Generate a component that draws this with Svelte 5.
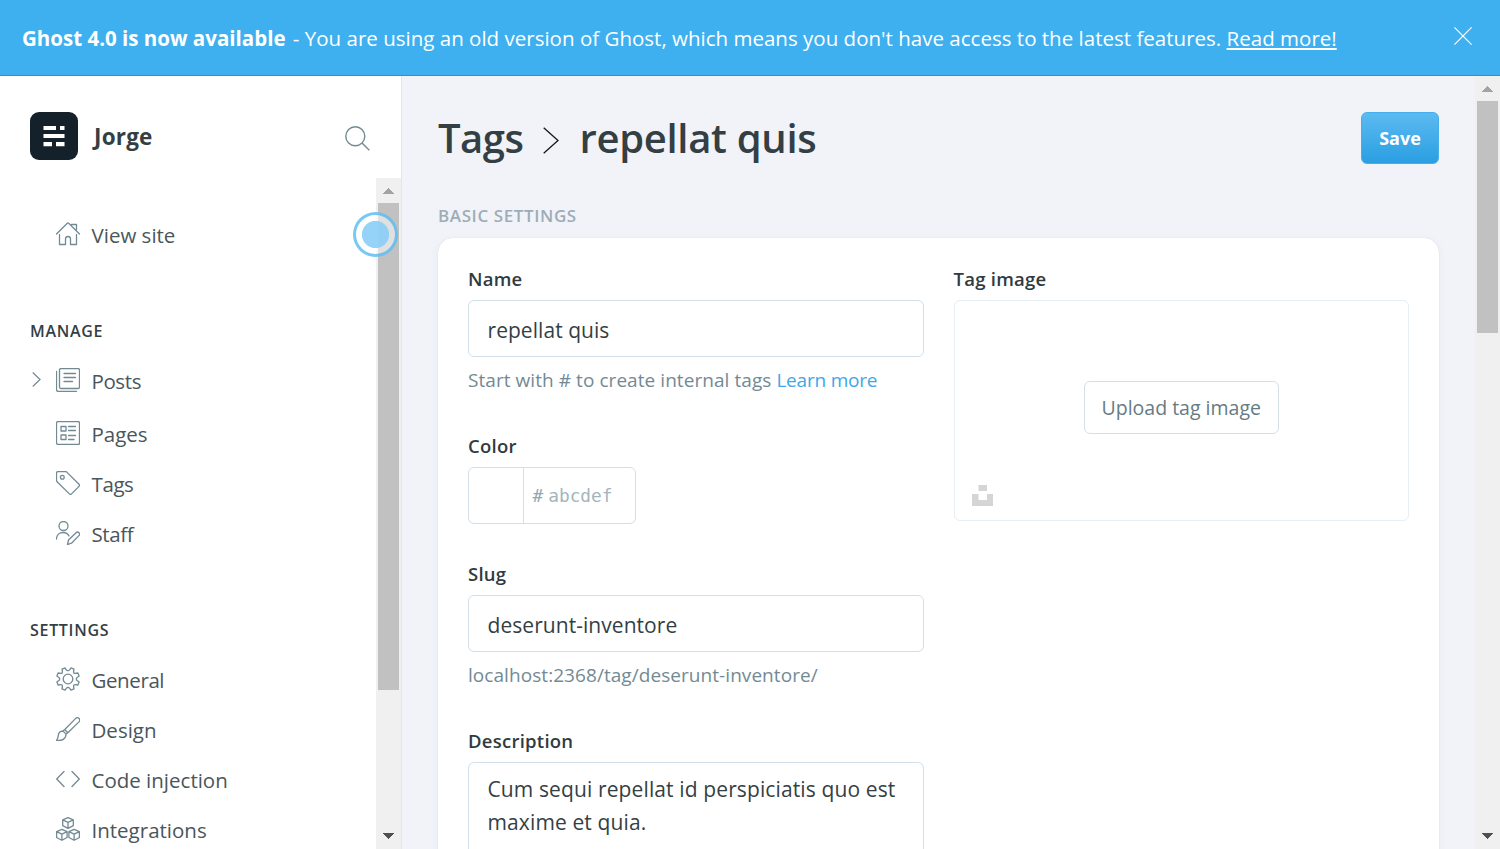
<script>
  const manage = [
    { name: 'Posts', icon: 'posts', expandable: true, tight: true },
    { name: 'Pages', icon: 'pages' },
    { name: 'Tags', icon: 'tag', tight: true },
    { name: 'Staff', icon: 'staff', tight: true }
  ];
  const settings = [
    { name: 'General', icon: 'gear', tight: true },
    { name: 'Design', icon: 'brush' },
    { name: 'Code injection', icon: 'code' },
    { name: 'Integrations', icon: 'cubes' }
  ];
</script>

{#snippet icon(kind)}
  <svg class="icon" viewBox="0 0 24 24">
    {#if kind === 'home'}
      <path d="M.5 12 11.3 1.2a1 1 0 0 1 1.4 0L23.5 12M3.5 12.5v10h6V17a2.5 2.5 0 0 1 5 0v5.500h6v-10M15.500 2.500h5v5" />
    {:else if kind === 'posts'}
      <rect x="3.500" y=".5" width="20" height="20" rx="1.500" />
      <path d="M.5 3.500v18a2 2 0 0 0 2 2h18M8 5.500h11.500M8 9.500h11.500M8 13.500h8.500" />
    {:else if kind === 'pages'}
      <rect x=".5" y=".5" width="23" height="23" rx="1.500" />
      <path d="M5 5.500h5v4.500H5zM5 14h5v4.500H5zM12.500 5.500h7M12.500 9.500h7M12.500 14.500h7M12.500 18.500h5.500" />
    {:else if kind === 'tag'}
      <path d="M.5 2v7.300c0 .5.200 1 .6 1.400l12.300 12.200a1.500 1.500 0 0 0 2.100 0l7.500-7.500a1.500 1.500 0 0 0 0-2.100L10.800 1.100A2 2 0 0 0 9.400.5H2A1.500 1.500 0 0 0 .5 2Z" />
      <circle cx="6.300" cy="6.300" r="1.900" />
    {:else if kind === 'staff'}
      <circle cx="7.500" cy="5" r="4.500" />
      <path d="M.5 18v-1a6.500 6.500 0 0 1 6.500-5.500c2.800 0 5 1.300 6 3.500M11.500 23.500l1-4.500 7.600-7.300a2 2 0 0 1 2.800 2.900L15.500 22.200l-4 1.300Z" />
    {:else if kind === 'gear'}
      <circle cx="12" cy="12" r="4.800" />
      <path d="M9.800 2.400 9 .900 6 2.100l.4 2.600c.1 1-.7 1.800-1.700 1.700L2.100 6 .900 9l2 1.500c1 .7 1 2.300 0 3L.900 15l1.200 3 2.600-.4c1-.1 1.800.7 1.700 1.700L6 21.900l3 1.200 1.500-2c.7-1 2.300-1 3 0l1.500 2 3-1.200-.4-2.600c-.1-1 .7-1.800 1.700-1.700l2.600.4 1.200-3-2-1.500c-1-.7-1-2.300 0-3l2-1.500-1.200-3-2.600.4c-1 .1-1.800-.7-1.700-1.700l.4-2.600-3-1.200-1.500 2c-.9 1.100-2.800 1.100-3.700-.7Z" />
    {:else if kind === 'brush'}
      <path d="M8.800 12.500 19.700 1.400a2.400 2.400 0 0 1 3.300 3.500L11.800 15.700M8.800 12.500l3 3.200-1.700 1.400-3.200-3.100 1.900-1.500ZM6.900 14c-2.400.2-4.400 1.600-4.600 4.400-.1 2-.8 3.700-1.800 5 5.300.6 9.500-1.200 9.600-6.300" />
    {:else if kind === 'code'}
      <path d="M8 4.500.700 12 8 19.500M16 4.500l7.300 7.500-7.300 7.500" />
    {:else if kind === 'cubes'}
      <path d="m12 .6 5.300 2.300v5.800L12 11.300 6.700 8.700V2.900ZM6.700 2.900 12 5.300l5.300-2.400M12 5.300v6M5.900 12.400l5.200 2.300v5.800l-5.200 2.800-5.300-2.800v-5.800ZM.6 14.700l5.300 2.500 5.200-2.500M5.900 17.200v6.100M18.100 12.400l5.300 2.300v5.800l-5.300 2.800-5.200-2.800v-5.800ZM12.900 14.700l5.200 2.500 5.300-2.500M18.100 17.200v6.100" />
    {/if}
  </svg>
{/snippet}

{#snippet bar(kind)}
  <div class="scrollbar {kind}">
    <svg class="arrow up" viewBox="0 0 11 6" shape-rendering="crispEdges"><path d="M0 6 5.500 0 11 6Z" /></svg>
    <div class="track"><div class="thumb"></div></div>
    <svg class="arrow down" viewBox="0 0 11 6" shape-rendering="crispEdges"><path d="M0 0h11L5.500 6Z" /></svg>
  </div>
{/snippet}

<div class="app">
  <header class="banner">
    <div class="message"><b>Ghost 4.0 is now available</b> <span>- You are using an old version of Ghost, which means you don't have access to the latest features. <a href="#more">Read more!</a></span></div>
    <svg class="close" viewBox="0 0 18 18"><path d="m.4.4 17.200 17.200M17.600.4.4 17.600" /></svg>
  </header>
  <div class="body">
    <aside>
      <div class="site">
        <svg class="logo" viewBox="0 0 48 48">
          <rect width="48" height="48" rx="9" fill="#15212a" />
          <path fill="#fff" d="M13.500 14h12.500v4H13.500zM30 14h4.500v4H30zM13.500 22h21v4h-21zM13.500 30h8.500v4.200h-8.500zM26 30h8.500v4.200H26z" />
        </svg>
        <strong>Jorge</strong>
        <svg class="search" viewBox="0 0 25 25"><circle cx="10.300" cy="10.300" r="9.500" /><path d="m17 17 7.300 7.300" /></svg>
      </div>
      <div class="scroller">
        <nav>
          <div class="item view">{@render icon('home')}<span>View site</span></div>
          <h4>Manage</h4>
          {#each manage as m}
            <div class="item" class:tall={m.expandable} class:tight={m.tight}>
              {#if m.expandable}
                <svg class="chevron" viewBox="0 0 8 14"><path d="m.5.5 6.800 6.500L.5 13.500" /></svg>
              {/if}
              {@render icon(m.icon)}<span>{m.name}</span>
            </div>
          {/each}
          <h4 class="second">Settings</h4>
          {#each settings as s}
            <div class="item" class:tight={s.tight}>{@render icon(s.icon)}<span>{s.name}</span></div>
          {/each}
        </nav>
        {@render bar('side')}
        <div class="beacon"></div>
      </div>
    </aside>
    <main>
      <div class="content">
        <div class="heading">
          <h1>
            <span class="crumb">Tags</span>
            <svg viewBox="0 0 16 27"><path d="m.7.7 14.300 12.800L.7 26.300" /></svg>
            <span class="current">repellat quis</span>
          </h1>
          <button class="save">Save</button>
        </div>
        <h5>Basic settings</h5>
        <section class="card">
          <div class="column">
            <div class="label">Name</div>
            <div class="input">repellat quis</div>
            <p class="hint start">Start with # to create internal tags <a href="#learn">Learn more</a></p>
            <div class="label">Color</div>
            <div class="color"><div class="swatch"></div><span class="hash">#</span><span>abcdef</span></div>
            <div class="label slug">Slug</div>
            <div class="input">deserunt-inventore</div>
            <p class="hint">localhost:2368/tag/deserunt-inventore/</p>
            <div class="label">Description</div>
            <div class="input area">Cum sequi repellat id perspiciatis quo est maxime et quia.</div>
          </div>
          <div class="column">
            <div class="label">Tag image</div>
            <div class="uploader">
              <button>Upload tag image</button>
              <svg class="unsplash" viewBox="0 0 21 21"><path d="M6.500 0h8.500v6H6.500zM0 9h6.500v6H15V9h6v12H0z" /></svg>
            </div>
          </div>
        </section>
      </div>
      {@render bar('page')}
    </main>
  </div>
</div>

<style>
  :global(body) { margin: 0; overflow: hidden; }
  * { box-sizing: border-box; }
  .app {
    display: flex; flex-direction: column; width: 1500px; height: 849px; overflow: hidden;
    font-family: "Open Sans", "Noto Sans", sans-serif; color: #343f44; background: #fff;
  }
  svg { display: block; flex: none; fill: none; }
  .banner {
    height: 76px; flex: none; display: flex; align-items: center; justify-content: space-between;
    padding: 0 28px 0 22px; background: #3eb0ef; border-bottom: 1px solid #1f97dc; color: #fff;
    font-size: 20.500px; white-space: nowrap;
  }
  .banner span { margin-left: 2px; letter-spacing: .01px; }
  .banner a { color: inherit; text-underline-offset: 2px; }
  .close { width: 18px; height: 18px; stroke: #fff; stroke-width: 1.200; margin-top: -4px; }
  .body { display: flex; flex: 1; min-height: 0; }
  aside { width: 402px; flex: none; border-right: 1px solid #e3e6ed; display: flex; flex-direction: column; }
  .site { display: flex; align-items: center; height: 102px; padding: 20px 31px 2px 30px; flex: none; }
  .logo { width: 48px; height: 48px; }
  .site strong { font-size: 22.500px; letter-spacing: .2px; font-weight: 700; margin-left: 16px; flex: 1; }
  .search { width: 25px; height: 25px; stroke: #738a94; stroke-width: 1.400; margin-top: 4px; }
  .scroller { position: relative; flex: 1; min-height: 0; display: flex; overflow: hidden; }
  nav { flex: 1; padding-top: 32px; }
  .item { display: flex; align-items: center; height: 50px; padding-left: 56px; font-size: 20.500px; color: #4a565b; }
  .item.tall { height: 56px; padding-left: 32px; }
  .item.tight { letter-spacing: -.4px; }
  .chevron { width: 9px; height: 15px; margin: -3px 15px 0 0; stroke: #738a94; stroke-width: 1.150; }
  .icon { width: 24px; height: 24px; margin: -2px 11.500px 0 0; stroke: #738a94; stroke-width: 1.300; stroke-linecap: round; stroke-linejoin: round; }
  h4 { margin: 61px 0 12px 30px; font-size: 16px; letter-spacing: .7px; line-height: 20px; font-weight: 600; text-transform: uppercase; color: #343f44; }
  h4.second { margin-bottom: 15px; }
  .beacon {
    position: absolute; left: 353px; top: 33.500px; width: 45px; height: 45px; border-radius: 50%;
    border: 3px solid rgba(62, 176, 239, .7); background: radial-gradient(circle, rgba(142, 208, 247, .94) 13.200px, rgba(255, 255, 255, .5) 14px);
  }
  .scrollbar { width: 25px; flex: none; background: #f0f0f0; display: flex; flex-direction: column; align-items: center; }
  .arrow { width: 11px; height: 6px; margin: 10px 0 9px; }
  .arrow.up { fill: #a3a3a3; }
  .arrow.down { fill: #505050; margin: 9px 0 10px; }
  .track { flex: 1; width: 21px; }
  .thumb { background: #c1c1c1; height: 487px; }
  .page .thumb { height: 232px; }
  main { flex: 1; min-width: 0; background: #f2f3f8; display: flex; overflow: hidden; }
  .content { flex: 1; padding: 36px 36px 0; }
  .heading { display: flex; justify-content: space-between; height: 52px; }
  h1 { display: flex; align-items: center; margin: 0; font-size: 40px; letter-spacing: -.3px; line-height: 52px; font-weight: 600; white-space: nowrap; }
  .crumb { letter-spacing: -.5px; }
  h1 svg { width: 16px; height: 27px; stroke: #15171a; stroke-width: 1.300; margin: 4px 20px 0; }
  .save {
    width: 78px; height: 52px; padding: 0; border: 1px solid #46afe9; border-radius: 6px; color: #fff;
    background: linear-gradient(#5cbaf1, #2a9fe2); font: 700 18px "Open Sans", sans-serif;
  }
  h5 { margin: 41px 0 12px; font-size: 17px; letter-spacing: .6px; line-height: 21px; font-weight: 600; color: #9baeb8; text-transform: uppercase; }
  .card { display: flex; gap: 30px; height: 700px; padding: 30px; background: #fff; border-radius: 15px; box-shadow: 0 0 1px rgba(0, 0, 0, .16), 0 2px 9px rgba(60, 70, 110, .05); }
  .column { flex: 1 1 0; min-width: 0; }
  .label { height: 32px; line-height: 21px; font-size: 18.500px; letter-spacing: .25px; font-weight: 600; color: #2f3b41; }
  .input { height: 57px; border: 1px solid #d4e0e7; border-radius: 6px; padding: 0 18.500px; line-height: 59px; font-size: 21px; letter-spacing: .05px; }
  .input.area { height: 120px; padding-top: 10px; line-height: 33px; letter-spacing: .12px; }
  .hint { margin: 0; height: 78px; line-height: 46px; font-size: 19px; letter-spacing: .06px; color: #738a94; white-space: nowrap; }
  .hint a { color: #3ea7e8; text-decoration: none; letter-spacing: -.2px; }
  .color { width: 168px; height: 57px; border: 1px solid #d4e0e7; border-radius: 6px; display: flex; align-items: center; font: 17.800px "DejaVu Sans Mono", monospace; color: #a4b5be; }
  .swatch { width: 55px; height: 55px; border-right: 1px solid #d4e0e7; }
  .hash { margin: 0 5px 0 8.500px; color: #90a8b5; }
  .slug { margin-top: 39px; }
  .uploader { position: relative; height: 221px; border: 1px solid #e5eff5; border-radius: 6px; display: flex; align-items: center; justify-content: center; }
  .uploader button { width: 195px; height: 53px; margin-top: -6px; padding: 0; background: #fff; border: 1px solid #d4e0e7; border-radius: 6px; color: #667b83; font: 19.500px "Open Sans", sans-serif; white-space: nowrap; }
  .unsplash { position: absolute; left: 17px; bottom: 14px; width: 21px; height: 21px; fill: #d5d5d5; }
</style>
